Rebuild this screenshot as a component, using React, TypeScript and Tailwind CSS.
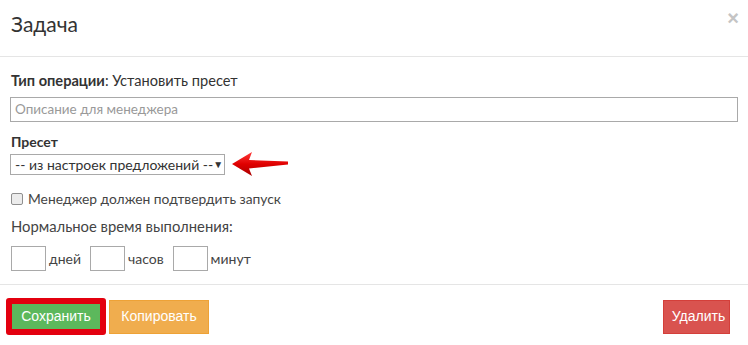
import React from "react";

const body = { fontFamily: 'Lato, Roboto, "Liberation Sans", sans-serif' };
const btn = { fontFamily: '"Liberation Sans", Arial, sans-serif' };

const PointerArrow = () => (
  <svg width="58" height="26" viewBox="0 0 58 26" className="ml-[6px]">
    <defs>
      <linearGradient id="arrowFill" x1="0" y1="0" x2="0" y2="1">
        <stop offset="0" stopColor="#ff3a3a" />
        <stop offset="0.5" stopColor="#e00000" />
        <stop offset="1" stopColor="#a80000" />
      </linearGradient>
    </defs>
    <path d="M1 13 L21 1 L18 9 L57 10.5 L57 13.5 L18 17.5 L21 25 Z" fill="url(#arrowFill)" />
  </svg>
);

const SmallBox = ({ label }: { label: string }) => (
  <div className="flex items-center">
    <div className="w-[35px] h-[25px] border border-[#a9a9a9] bg-white" />
    <span className="ml-[3px] text-[14px] text-[#444]">{label}</span>
  </div>
);

export default function App() {
  return (
    <div className="w-[748px] h-[345px] bg-white text-[#333] relative" style={body}>
      {/* header */}
      <div className="h-[57px] border-b border-[#e5e5e5] flex items-start justify-between pl-[11px] pr-[9px] pt-[9px]">
        <h4 className="text-[21px] leading-[30px] font-normal text-[#333]">Задача</h4>
        <span className="text-[20px] leading-[18px] font-bold text-[#c4c4c4]" style={btn}>×</span>
      </div>

      {/* body */}
      <div className="px-[10px] pt-[14px] pb-[16px] h-[227px]">
        <div className="pl-[1px] text-[14.6px] leading-5">
          <b className="font-bold">Тип операции</b>: Установить пресет
        </div>
        <div className="mt-[6px] h-[25px] border border-[#a9a9a9] flex items-center pl-[4px] text-[13.5px] text-[#999]">
          Описание для менеджера
        </div>

        <div className="mt-[11px] pl-[1px] text-[14px] leading-[18px] font-bold">Пресет</div>
        <div className="flex items-center">
          <div className="w-[215px] h-[21px] border border-[#a9a9a9] flex items-center justify-between pl-[4px] pr-[6px] text-[14px] text-[#333] whitespace-nowrap">
            <span>-- из настроек предложений --</span>
            <span className="text-[10px]">▼</span>
          </div>
          <PointerArrow />
        </div>

        <div className="mt-[12px] h-5 flex items-center pl-[1px]">
          <span className="w-[12px] h-[12px] rounded-[2px] border border-[#8f8f8f] bg-[#ececec]" />
          <span className="ml-[5px] text-[13.8px] text-[#444]">Менеджер должен подтвердить запуск</span>
        </div>

        <div className="mt-[7px] pl-[1px] text-[14.8px] leading-5 text-[#444]">Нормальное время выполнения:</div>

        <div className="mt-[10px] flex items-center gap-[9px] pl-[1px]">
          <SmallBox label="дней" />
          <SmallBox label="часов" />
          <SmallBox label="минут" />
        </div>
      </div>

      {/* footer */}
      <div className="border-t border-[#e5e5e5] pt-[13px] pl-[6px] pr-[18px] flex items-center" style={btn}>
        <button className="w-[100px] h-[37px] rounded-[3px] border-[6px] border-[#e3000f] bg-[#5cb85c] text-white text-[14px]">
          Сохранить
        </button>
        <button className="ml-[3px] w-[100px] h-[34px] bg-[#f0ad4e] border border-[#eea236] text-white text-[14px]">
          Копировать
        </button>
        <button className="ml-auto w-[67px] h-[34px] bg-[#d9534f] border border-[#d43f3a] pl-[4px] text-white text-[14px]">
          Удалить
        </button>
      </div>
    </div>
  );
}
